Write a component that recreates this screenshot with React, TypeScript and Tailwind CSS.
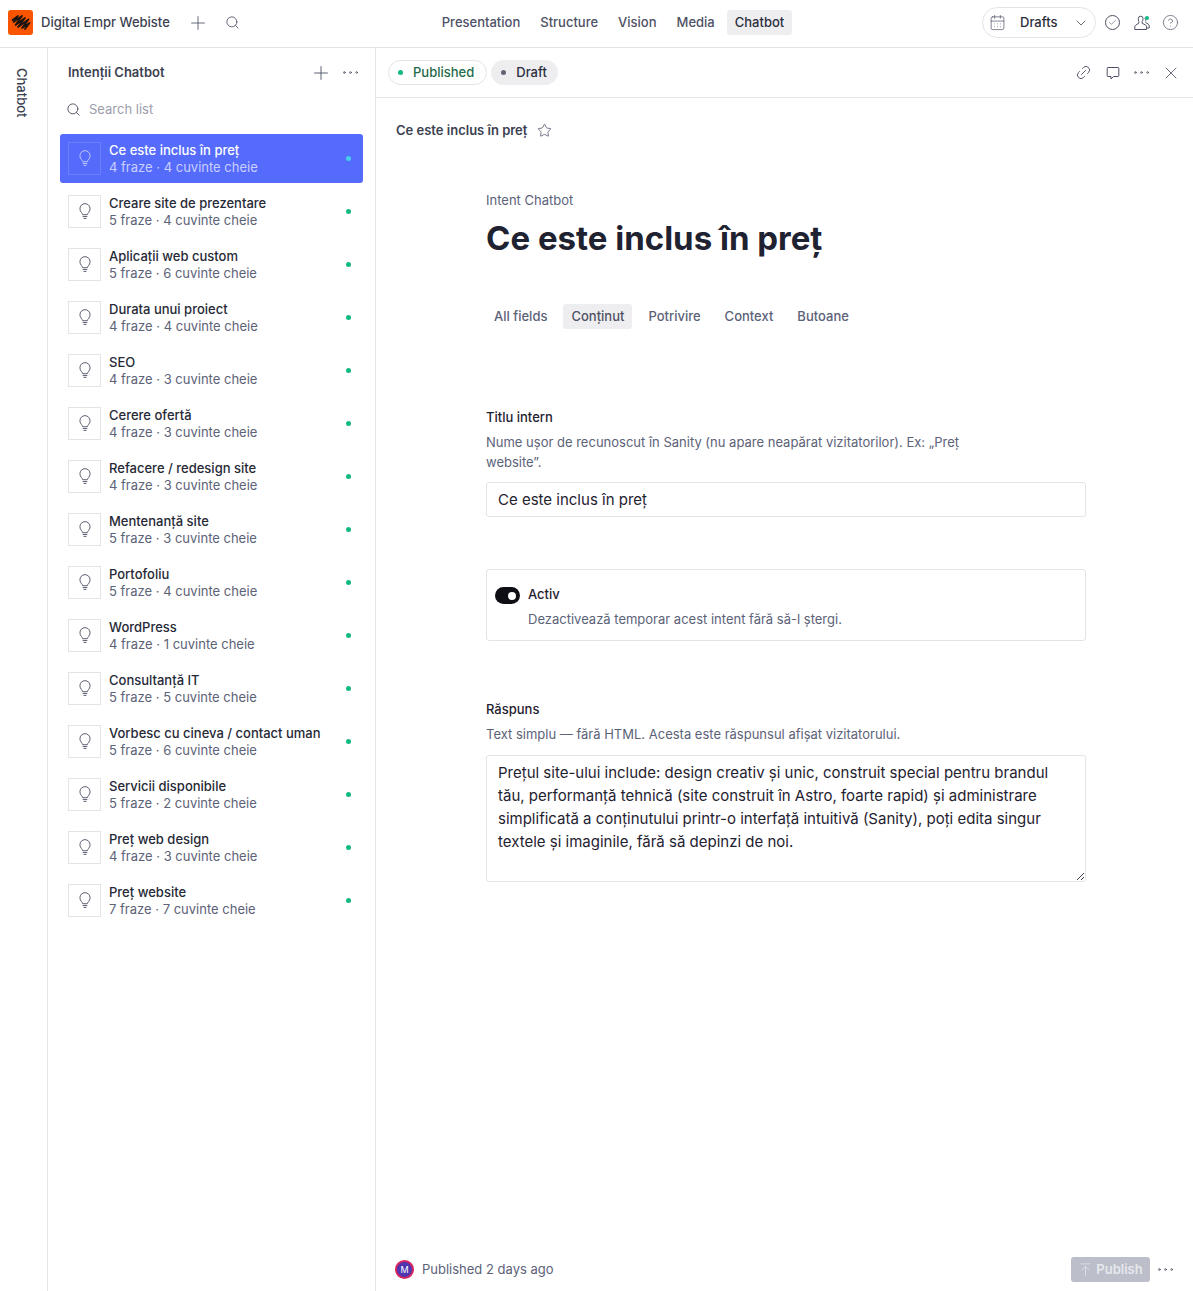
import { ArrowUpToLine, CalendarDays, Check, ChevronDown, CircleHelp, Link2, MoreHorizontal, Plus, Search, Star, X } from "lucide-react";

const intents = [
  { title: "Ce este inclus în preț", meta: "4 fraze · 4 cuvinte cheie" },
  { title: "Creare site de prezentare", meta: "5 fraze · 4 cuvinte cheie" },
  { title: "Aplicații web custom", meta: "5 fraze · 6 cuvinte cheie" },
  { title: "Durata unui proiect", meta: "4 fraze · 4 cuvinte cheie" },
  { title: "SEO", meta: "4 fraze · 3 cuvinte cheie" },
  { title: "Cerere ofertă", meta: "4 fraze · 3 cuvinte cheie" },
  { title: "Refacere / redesign site", meta: "4 fraze · 3 cuvinte cheie" },
  { title: "Mentenanță site", meta: "5 fraze · 3 cuvinte cheie" },
  { title: "Portofoliu", meta: "5 fraze · 4 cuvinte cheie" },
  { title: "WordPress", meta: "4 fraze · 1 cuvinte cheie" },
  { title: "Consultanță IT", meta: "5 fraze · 5 cuvinte cheie" },
  { title: "Vorbesc cu cineva / contact uman", meta: "5 fraze · 6 cuvinte cheie" },
  { title: "Servicii disponibile", meta: "5 fraze · 2 cuvinte cheie" },
  { title: "Preț web design", meta: "4 fraze · 3 cuvinte cheie" },
  { title: "Preț website", meta: "7 fraze · 7 cuvinte cheie" },
];

const nav = ["Presentation", "Structure", "Vision", "Media", "Chatbot"];
const tabs = ["All fields", "Conținut", "Potrivire", "Context", "Butoane"];

const Logo = () => (
  <div className="size-[25px] shrink-0 rounded-[3px] bg-[#f95500]">
    <svg viewBox="0 0 25 25" className="size-[25px]" fill="none" stroke="#1a1410" strokeWidth="1.7" strokeLinecap="round" strokeLinejoin="round">
      <path d="M4.5 10 L10 6 L5.5 12 L14 6 L7.5 15 L17 8 L10 17 L20.500 9.500 L14 18 L21.500 13 L17 19" />
    </svg>
  </div>
);

const BulbIcon = ({ className }: { className: string }) => (
  <svg viewBox="0 0 13 18" className={`h-[17px] w-[12px] ${className}`} fill="none" stroke="currentColor" strokeWidth="1">
    <path d="M4 12.500C4 10.800 1 9.500 1 6a5.500 5.500 0 0 1 11 0c0 3.500-3 4.800-3 6.500z" />
    <path d="M4 14.500h5M5 16.500h3" />
  </svg>
);

const Row = ({ title, meta, active }: { title: string; meta: string; active: boolean }) => (
  <div className={`flex h-[49px] items-center rounded-[3px] pl-2 pr-3 ${active ? "bg-[#556bfc]" : "bg-white"}`}>
    <div className={`flex size-[33px] shrink-0 items-center justify-center border ${active ? "border-[#6b7ffc]" : "border-[#e3e4e8]"}`}>
      <BulbIcon className={active ? "text-[#c9d0fe]" : "text-[#4e5165]"} />
    </div>
    <div className="ml-2 min-w-0 flex-1">
      <div className={`text-[13px] leading-[17px] font-medium ${active ? "text-white" : "text-[#262936]"}`}>{title}</div>
      <div className={`text-[13px] leading-[17px] ${active ? "text-[#c9d0fe]" : "text-[#5c6278]"}`}>{meta}</div>
    </div>
    <span className={`size-[5px] rounded-full ${active ? "bg-[#43d0e8]" : "bg-[#10b981]"}`} />
  </div>
);

export default function App() {
  return (
    <div className="flex h-[1291px] w-[1193px] flex-col overflow-hidden bg-white font-['Inter',sans-serif] text-[#1f2230]">
      <header className="flex h-[48px] shrink-0 items-center border-b border-[#e3e4e8] pb-[2px] pl-2 pr-[14px]">
        <Logo />
        <span className="ml-2 text-[13px] font-medium text-[#3c3f50]">Digital Empr Webiste</span>
        <Plus size={22} strokeWidth={1} className="ml-[17px] text-[#5b5e70]" />
        <Search size={15} strokeWidth={1.5} className="ml-[16px] text-[#5b5e70]" />
        <nav className="ml-[194px] flex items-center gap-1">
          {nav.map((item) => (
            <span
              key={item}
              className={`rounded-[3px] px-2 py-[5px] text-[13px] leading-[15px] font-medium ${item === "Chatbot" ? "bg-[#eeeef1] text-[#2b2e3d]" : "text-[#4e5165]"}`}
            >
              {item}
            </span>
          ))}
        </nav>
        <div className="ml-auto flex h-[31px] w-[114px] items-center rounded-full border border-[#e3e4e8] pl-[6px] pr-[6px]">
          <CalendarDays size={17} strokeWidth={1} className="text-[#4e5165]" />
          <span className="ml-[14px] text-[13px] font-medium text-[#2b2e3d]">Drafts</span>
          <ChevronDown size={16} strokeWidth={1.25} className="ml-auto text-[#4e5165]" />
        </div>
        <div className="ml-[9px] flex size-[15px] items-center justify-center rounded-full border border-[#4e5165]">
          <Check size={9} strokeWidth={1.5} className="text-[#4e5165]" />
        </div>
        <div className="relative ml-[14px] size-[16px]">
          <svg viewBox="0 0 16 16" className="size-[16px]" fill="none" stroke="#4e5165" strokeWidth="1">
            <path d="M4.300 3.600a2.400 2.400 0 0 1 4.800 0c0 1.200-.5 2.400-1 3v1.600l3.600 2c.6.4.9.9.9 1.600v2.700H.8v-2.700c0-.7.3-1.200.9-1.600l3.100-2V6.600c-.3-.6-.5-1.800-.5-3z" />
            <path d="M10.500 3.200c.9.5 1.400 2 1.200 3.200M11.500 7.500l2.600 1.500c.7.4 1.100 1 1.100 1.700v2.300h-2" />
          </svg>
          <span className="absolute left-[11px] top-[1px] size-[4px] rounded-full bg-[#10b981]" />
        </div>
        <CircleHelp size={17} strokeWidth={1} className="ml-[12px] text-[#4e5165]" />
      </header>

      <div className="flex min-h-0 flex-1">
        <aside className="flex w-[48px] shrink-0 justify-center border-r border-[#e3e4e8] pr-[4px] pt-[20px]">
          <span className="text-[13px] leading-[15px] font-medium text-[#3c3f50] [writing-mode:vertical-rl]">Chatbot</span>
        </aside>

        <section className="flex w-[328px] shrink-0 flex-col border-r border-[#e3e4e8]">
          <div className="flex h-[49px] items-center pl-5 pr-[14px]">
            <span className="text-[13px] font-semibold text-[#3c3f50]">Intenții Chatbot</span>
            <Plus size={22} strokeWidth={1} className="ml-auto text-[#4e5165]" />
            <MoreHorizontal size={21} strokeWidth={0.9} className="ml-[8px] text-[#4e5165]" />
          </div>
          <div className="flex h-[25px] items-center pl-[18px]">
            <Search size={15} strokeWidth={1.5} className="text-[#4e5165]" />
            <span className="ml-[8px] text-[13px] text-[#9b9dab]">Search list</span>
          </div>
          <div className="mt-[12px] flex flex-col gap-1 pl-3 pr-3">
            {intents.map((intent, index) => (
              <Row key={intent.title} title={intent.title} meta={intent.meta} active={index === 0} />
            ))}
          </div>
        </section>

        <main className="flex min-w-0 flex-1 flex-col">
          <div className="flex h-[50px] shrink-0 items-center gap-1 border-b border-[#e3e4e8] pl-3 pr-2">
            <span className="flex h-[25px] items-center rounded-full border border-[#e3e4e8] pl-[9px] pr-[12px] text-[13px] font-medium text-[#1f6b4a]">
              <span className="mr-[10px] size-[5px] rounded-full bg-[#10b981]" />
              Published
            </span>
            <span className="flex h-[25px] items-center rounded-full bg-[#eeeef1] pl-[10px] pr-[11px] text-[13px] font-medium text-[#2b2e3d]">
              <span className="mr-[10px] size-[5px] rounded-full bg-[#626476]" />
              Draft
            </span>
            <div className="ml-auto flex items-center text-[#4e5165]">
              <span className="flex w-[29px] items-center justify-center">
                <Link2 size={17} strokeWidth={1.25} className="-rotate-45" />
              </span>
              <span className="flex w-[29px] items-center justify-center">
                <svg viewBox="0 0 14 14" className="size-[14px]" fill="none" stroke="currentColor" strokeWidth="1" strokeLinejoin="round">
                  <path d="M2 1.500h10a.8.8 0 0 1 .8.8v7.400a.8.8 0 0 1-.8.8H7.500L5 13v-2.500H2a.8.8 0 0 1-.8-.8V2.300a.8.8 0 0 1 .8-.8z" />
                </svg>
              </span>
              <span className="flex w-[29px] items-center justify-center">
                <MoreHorizontal size={21} strokeWidth={0.9} />
              </span>
              <span className="flex w-[29px] items-center justify-center">
                <X size={20} strokeWidth={1} />
              </span>
            </div>
          </div>

          <div className="flex h-[65px] items-center pl-[20px]">
            <span className="text-[13px] font-semibold text-[#3c3f50]">Ce este inclus în preț</span>
            <Star size={15} strokeWidth={1.25} className="ml-[10px] text-[#4e5165]" />
          </div>

          <div className="flex-1 pl-[110px] pr-[107px]">
            <div className="pt-[29px] text-[13px] leading-[16px] text-[#5c6278]">Intent Chatbot</div>
            <h1 className="mt-[8px] text-[33px] leading-[44px] font-bold text-[#1f2230]">Ce este inclus în preț</h1>

            <div className="mt-[44px] flex items-center gap-[8px] text-[13px] font-medium text-[#5c6278]">
              {tabs.map((tab) => (
                <span
                  key={tab}
                  className={`rounded-[3px] px-2 py-[5px] leading-[15px] ${tab === "Conținut" ? "bg-[#eeeef1] text-[#4e5165]" : ""}`}
                >
                  {tab}
                </span>
              ))}
            </div>

            <div className="mt-[80px] text-[13px] leading-[16px] font-medium text-[#1f2230]">Titlu intern</div>
            <p className="mt-[7px] w-[500px] text-[13px] leading-[20px] text-[#5c6278]">
              Nume ușor de recunoscut în Sanity (nu apare neapărat vizitatorilor). Ex: „Preț website”.
            </p>
            <div className="mt-[10px] flex h-[35px] items-center rounded-[3px] border border-[#e3e4e8] px-[11px] pt-[2px] text-[15px] text-[#1f2230]">
              Ce este inclus în preț
            </div>

            <div className="mt-[52px] flex h-[72px] rounded-[3px] border border-[#e3e4e8] pl-2 pt-[15px]">
              <div className="mt-[2px] flex h-[17px] w-[25px] items-center justify-end rounded-full bg-[#0e0f14] pr-[4px]">
                <span className="size-[8px] rounded-full bg-white" />
              </div>
              <div className="ml-2">
                <div className="text-[13px] leading-[18px] font-medium text-[#1f2230]">Activ</div>
                <div className="mt-[7px] text-[13px] leading-[18px] text-[#5c6278]">Dezactivează temporar acest intent fără să-l ștergi.</div>
              </div>
            </div>

            <div className="mt-[60px] text-[13px] leading-[16px] font-medium text-[#1f2230]">Răspuns</div>
            <p className="mt-[8px] text-[13px] leading-[18px] text-[#5c6278]">Text simplu — fără HTML. Acesta este răspunsul afișat vizitatorului.</p>
            <div className="relative mt-[12px] h-[127px] rounded-[3px] border border-[#e3e4e8] px-[11px] py-[5px] text-[15px] leading-[23px] text-[#1f2230]">
              Prețul site-ului include: design creativ și unic, construit special pentru brandul tău, performanță tehnică (site construit în Astro, foarte rapid) și administrare simplificată a conținutului printr-o interfață intuitivă (Sanity), poți edita singur textele și imaginile, fără să depinzi de noi.
              <svg viewBox="0 0 9 9" className="absolute bottom-0 right-0 size-[9px]" stroke="#3c3f50" strokeWidth="1">
                <path d="M1 8 L8 1 M5 8 L8 5" />
              </svg>
            </div>
          </div>

          <div className="flex h-[43px] shrink-0 items-center pl-[19px] pr-[17px]">
            <div className="flex size-[19px] items-center justify-center rounded-full border-2 border-[#d6245f] bg-[#4f35b0] text-[9px] text-white">M</div>
            <span className="ml-2 text-[13px] text-[#5c6278]">Published 2 days ago</span>
            <div className="ml-auto flex h-[25px] w-[79px] items-center justify-center gap-[3px] rounded-[3px] bg-[#bcbec9] text-[13px] font-semibold text-[#e6e8ee]">
              <ArrowUpToLine size={15} strokeWidth={1.25} />
              Publish
            </div>
            <MoreHorizontal size={21} strokeWidth={0.9} className="ml-[5px] text-[#4e5165]" />
          </div>
        </main>
      </div>
    </div>
  );
}
